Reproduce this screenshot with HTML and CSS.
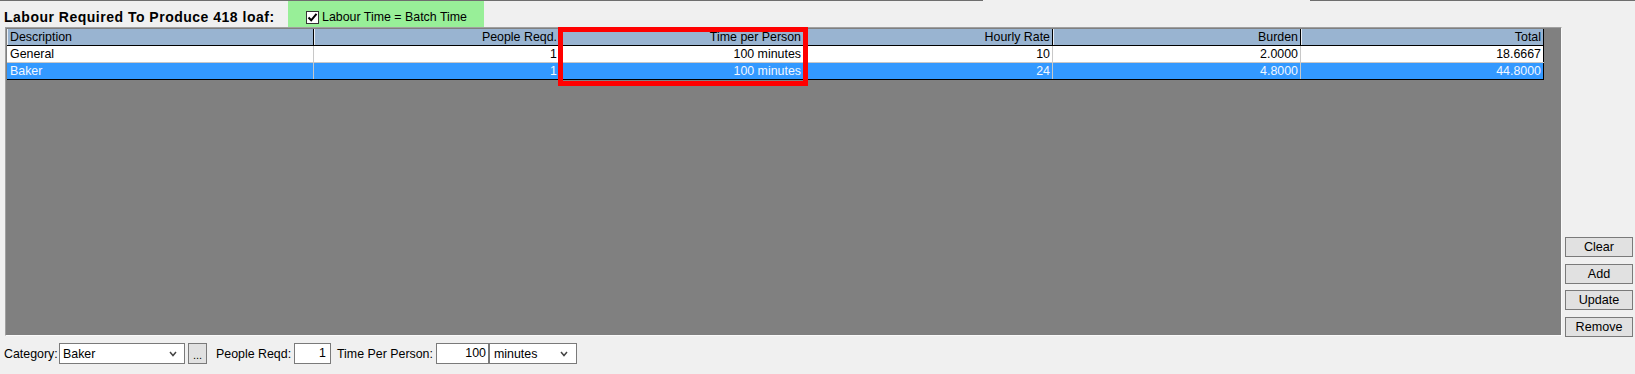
FILE: index.html
```html
<!DOCTYPE html>
<html>
<head>
<meta charset="utf-8">
<link rel="stylesheet" href="styles.css">
</head>
<body>
<div class="app">
  <div class="topline"><span class="seg seg-a"></span><span class="seg seg-b"></span></div>
  <div class="titlebar">
    <div class="title">Labour Required To Produce 418 loaf:</div>
    <div class="batch">
      <span class="chk"><svg width="11" height="11" viewBox="0 0 11 11"><path d="M1.5 5.5 L4.2 8.3 L9.5 1.8" fill="none" stroke="#000" stroke-width="2"/></svg></span>
      <span class="batch-label">Labour Time = Batch Time</span>
    </div>
  </div>
  <div class="main">
    <div class="panel">
      <div class="grid">
        <div class="row head">
          <div class="c l">Description</div>
          <div class="c">People Reqd.</div>
          <div class="c">Time per Person</div>
          <div class="c">Hourly Rate</div>
          <div class="c">Burden</div>
          <div class="c">Total</div>
        </div>
        <div class="row body">
          <div class="c l">General</div>
          <div class="c">1</div>
          <div class="c">100 minutes</div>
          <div class="c">10</div>
          <div class="c">2.0000</div>
          <div class="c">18.6667</div>
        </div>
        <div class="row body sel last">
          <div class="c l">Baker</div>
          <div class="c">1</div>
          <div class="c">100 minutes</div>
          <div class="c">24</div>
          <div class="c">4.8000</div>
          <div class="c">44.8000</div>
        </div>
      </div>
    </div>
    <div class="actions">
      <button class="btn b1">Clear</button>
      <button class="btn b2">Add</button>
      <button class="btn b3">Update</button>
      <button class="btn b4">Remove</button>
    </div>
  </div>
  <div class="editor">
    <span class="lbl lbl-cat">Category:</span>
    <div class="combo combo-cat"><span>Baker</span><svg class="chev" width="8" height="6" viewBox="0 0 8 6"><path d="M1 1 L4 4.5 L7 1" fill="none" stroke="#444" stroke-width="1.5"/></svg></div>
    <button class="dots">...</button>
    <span class="lbl lbl-ppl">People Reqd:</span>
    <div class="field field-ppl">1</div>
    <span class="lbl lbl-time">Time Per Person:</span>
    <div class="field field-time">100</div>
    <div class="combo combo-unit"><span>minutes</span><svg class="chev" width="8" height="6" viewBox="0 0 8 6"><path d="M1 1 L4 4.5 L7 1" fill="none" stroke="#444" stroke-width="1.5"/></svg></div>
  </div>
  <div class="highlight"></div>
</div>
</body>
</html>
```
FILE: styles.css
```css
* { box-sizing: border-box; }
html, body { margin: 0; padding: 0; }
body {
  background: #f0f0f0;
  font-family: "Liberation Sans", Arial, sans-serif;
  font-size: 12.4px;
  color: #000;
}
.app { position: relative; width: 1635px; height: 374px; overflow: hidden; }

.topline { display: flex; height: 1px; }
.seg { display: block; height: 1px; background: #6e6e6e; }
.seg-a { width: 983px; }
.seg-b { width: 325px; margin-left: 327px; }

.titlebar { display: flex; height: 26px; align-items: flex-start; }
.title {
  margin-left: 4px;
  padding-top: 8px;
  font-weight: bold;
  font-size: 14px;
  letter-spacing: 0.5px;
  line-height: 16px;
  width: 284px;
  white-space: nowrap;
}
.batch {
  width: 196px;
  height: 26px;
  background: #98ef98;
  display: flex;
  align-items: flex-start;
  padding-left: 18px;
}
.chk {
  margin-top: 10px;
  width: 13px; height: 13px;
  border: 1px solid #333;
  background: #fff;
  display: flex; align-items: center; justify-content: center;
}
.batch-label { margin-left: 3px; padding-top: 8px; line-height: 16px; }

.main { display: flex; padding-left: 5px; height: 310px; }
.panel {
  width: 1557px;
  height: 309px;
  background: #808080;
  border: 1px solid;
  border-color: #a0a0a0 #fafafa #fafafa #a0a0a0;
  padding: 1px 0 0 1px;
}
.grid { width: 1537px; }
.row {
  display: grid;
  grid-template-columns: 307px 246px 244px 249px 248px 243px;
  height: 17px;
  border-bottom: 1px solid #c8c8c8;
}
.row .c {
  line-height: 16px;
  padding: 0 2px 0 3px;
  text-align: right;
  white-space: nowrap;
  overflow: hidden;
  border-right: 1px solid #c8c8c8;
}
.row .c:last-child { border-right-color: #000; }
.row .c.l { text-align: left; }
.head { background: #99b4d1; border-bottom-color: #000; }
.head .c { border-right-color: #000; box-shadow: inset 1px 0 0 #e9eef5; }
.body { background: #fff; }
.sel { background: #3399ff; color: #f2f7ff; }
.last { border-bottom-color: #000; }

.actions {
  margin-left: 3px;
  width: 68px;
  display: flex;
  flex-direction: column;
  justify-content: flex-end;
}
.btn {
  height: 20px;
  width: 68px;
  padding: 0;
  background: #e1e1e1;
  border: 1px solid #7a7a7a;
  font: inherit;
  font-size: 12.6px;
  color: #000;
  line-height: 18px;
}
.b2 { margin-top: 7px; }
.b3 { margin-top: 6px; }
.b4 { margin-top: 7px; }

.editor {
  display: flex;
  align-items: center;
  height: 21px;
  margin-top: 6px;
  padding-left: 4px;
}
.lbl { white-space: nowrap; line-height: 16px; }
.lbl-cat { width: 55px; }
.combo {
  height: 21px;
  background: #fff;
  border: 1px solid #7a7a7a;
  display: flex;
  align-items: center;
  justify-content: space-between;
  padding: 0 7px 0 3px;
}
.combo-cat { width: 126px; }
.dots {
  margin-left: 3px;
  width: 19px; height: 21px;
  padding: 0;
  background: #e1e1e1;
  border: 1px solid #7a7a7a;
  font: inherit;
  font-size: 11px;
  line-height: 22px;
  color: #000;
}
.lbl-ppl { margin-left: 9px; width: 78px; }
.field {
  height: 21px;
  background: #fff;
  border: 1px solid #7a7a7a;
  text-align: right;
  padding-right: 4px;
  line-height: 18px;
}
.field-ppl { width: 37px; }
.lbl-time { margin-left: 6px; width: 99px; }
.field-time { width: 53px; padding-right: 2px; }
.combo-unit { width: 88px; padding-left: 4px; padding-right: 8px; }

.highlight {
  position: absolute;
  left: 558px;
  top: 27px;
  width: 250px;
  height: 59px;
  border: 5px solid #ff0000;
}
```
